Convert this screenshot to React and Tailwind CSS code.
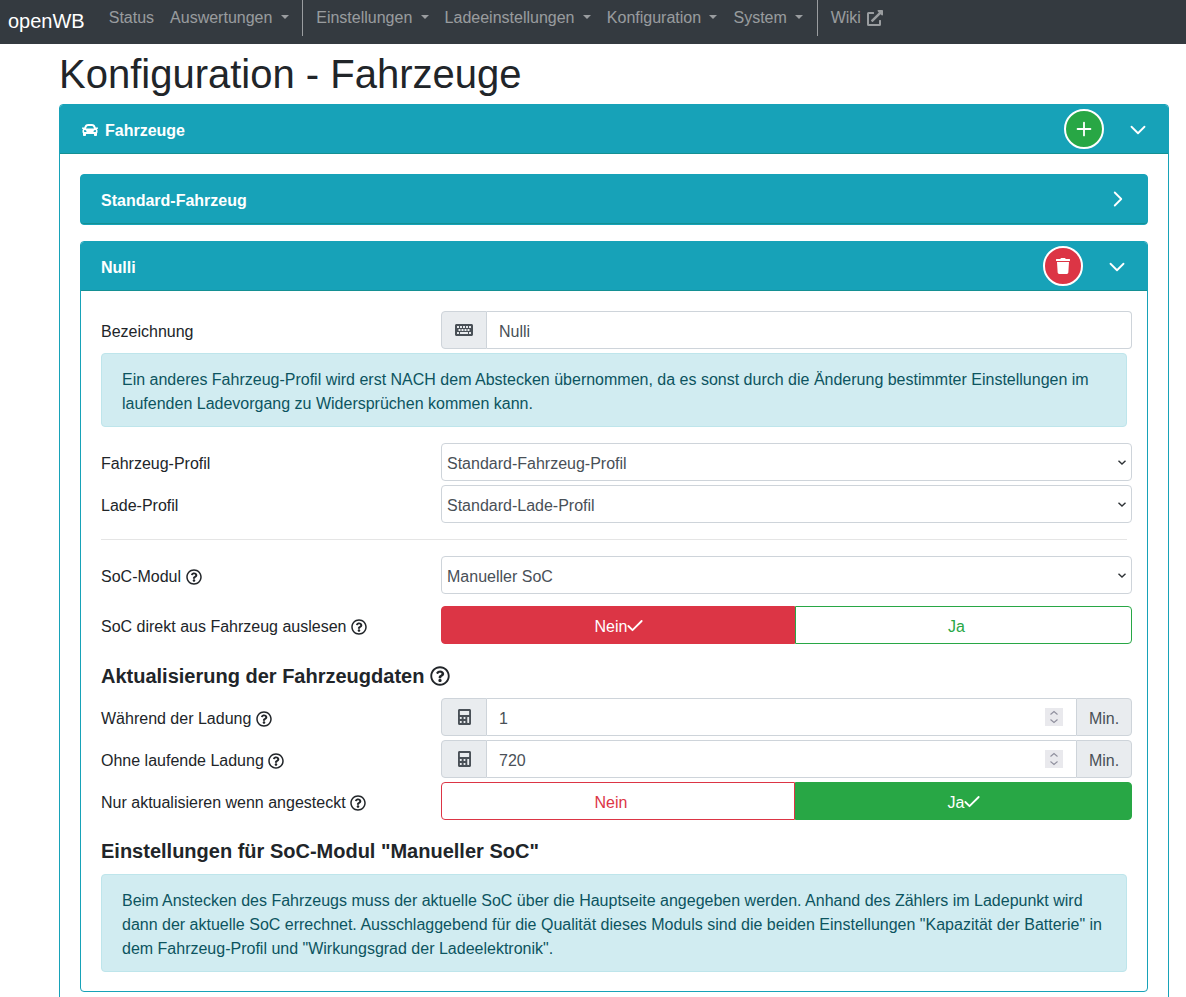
import React from "react";
import { FaCar, FaTrash, FaKeyboard, FaCalculator, FaExternalLinkAlt, FaRegQuestionCircle } from "react-icons/fa";
import { Check, ChevronDown, ChevronRight, Plus } from "lucide-react";

const NavItem = ({ children, caret }) => (
  <a className="flex items-center px-2 text-[16px] text-[#ffffff80] whitespace-pre">
    {children}
    {caret && <span className="ml-[8.33px] mt-[-3px] w-0 h-0 border-t-[4px] border-t-[#ffffff80] border-x-[4px] border-x-transparent" />}
  </a>
);

const Help = () => <FaRegQuestionCircle className="inline-block ml-[4.5px] text-[16px] text-[#212529]" />;

const Label = ({ children, help }) => (
  <div className="w-[340px] shrink-0 flex items-center pt-[4px] text-[16px] text-[#212529]">
    {children}
    {help && <Help />}
  </div>
);

const Row = ({ children, className = "" }) => (
  <div className={"flex items-stretch h-[38px] mr-[-5px] " + className}>{children}</div>
);

const Addon = ({ children, className = "" }) => (
  <div className={"flex items-center justify-center bg-[#e9ecef] border border-[#ced4da] text-[#495057] text-[16px] " + className}>
    {children}
  </div>
);

const SelectRow = ({ label, help, value, className }) => (
  <Row className={className}>
    <Label help={help}>{label}</Label>
    <div className="relative flex-1 min-w-0">
      <select
        defaultValue={value}
        className="w-full h-[38px] bg-white border border-[#ced4da] rounded-[4px] pl-[5px] pr-[20px] pt-[4px] text-[16px] text-[#495057] appearance-none"
      >
        <option>{value}</option>
      </select>
      <svg viewBox="0 0 8 5" className="absolute right-[6px] top-[17px] w-[8px] h-[5px] pointer-events-none" fill="none" stroke="#2f3337" strokeWidth="1.4">
        <path d="M0.5 0.7 L4 4 L7.5 0.7" />
      </svg>
    </div>
  </Row>
);

const NumberRow = ({ label, value, className }) => (
  <Row className={className}>
    <Label help>{label}</Label>
    <Addon className="w-[46px] rounded-l-[4px]">
      <FaCalculator className="w-[13px] h-[16px] text-[#495057]" preserveAspectRatio="none" />
    </Addon>
    <div className="relative flex-1 min-w-0">
      <input
        type="number"
        defaultValue={value}
        className="w-full h-[38px] bg-white border-y border-[#ced4da] px-3 pt-[4px] text-[16px] text-[#495057] outline-none [appearance:textfield] [&::-webkit-inner-spin-button]:appearance-none"
      />
      <div className="absolute right-[13px] top-[10px] w-[18px] h-[18px] bg-[#e9e9ed] pointer-events-none">
        <svg viewBox="0 0 18 18" className="w-[18px] h-[18px]" fill="none" stroke="#8f8f9d" strokeWidth="1.1">
          <path d="M5.5 6.5 L9 3.5 L12.5 6.5" />
          <path d="M5.5 11.5 L9 14.5 L12.5 11.5" />
        </svg>
      </div>
    </div>
    <Addon className="w-[56px] rounded-r-[4px] pt-[4px]">Min.</Addon>
  </Row>
);

const Tick = () => <Check className="w-[20px] h-[20px] ml-[-2px] mr-[-3px] mt-[-3px] shrink-0" strokeWidth={2.2} />;
const NoTick = () => <span className="w-[14px] shrink-0" />;

const Toggle = ({ label, help, yes }) => (
  <Row>
    <Label help={help}>{label}</Label>
    <div className="flex-1 flex text-[16px]">
      {yes ? (
        <>
          <div className="w-[354px] flex items-center justify-center pt-[4px] bg-white text-[#dc3545] border border-[#dc3545] rounded-l-[4px]">Nein<NoTick /></div>
          <div className="flex-1 flex items-center justify-center pt-[4px] bg-[#28a745] text-white border border-[#28a745] rounded-r-[4px]">
            Ja<Tick />
          </div>
        </>
      ) : (
        <>
          <div className="w-[354px] flex items-center justify-center pl-[1px] pt-[4px] bg-[#dc3545] text-white border border-[#dc3545] rounded-l-[4px]">
            Nein<Tick />
          </div>
          <div className="flex-1 flex items-center justify-center pt-[4px] bg-white text-[#28a745] border border-[#28a745] rounded-r-[4px]">Ja<NoTick /></div>
        </>
      )}
    </div>
  </Row>
);

const Alert = ({ children, className = "" }) => (
  <div className={"bg-[#d1ecf1] border border-[#bee5eb] rounded-[4px] px-5 pt-[14px] pb-[10px] text-[16px] leading-6 text-[#0c5460] " + className}>
    {children}
  </div>
);

const Circle = ({ children, color }) => (
  <div className={"w-[40px] h-[40px] rounded-full border-2 border-white flex items-center justify-center text-white " + color}>
    {children}
  </div>
);

const Header = ({ children, right, rounded = "rounded-t-[3px]" }) => (
  <div className={"h-[49px] bg-[#17a2b8] border-b border-[#149093] flex items-center justify-between pl-5 text-white font-bold text-[16px] " + rounded}>
    <span className="pt-[4px] flex items-center">{children}</span>
    {right}
  </div>
);

export default function App() {
  return (
    <div className="h-[997px] overflow-hidden bg-white" style={{ fontFamily: '"Liberation Sans", Arial, sans-serif' }}>
      <nav className="h-[44px] bg-[#343a40] flex items-stretch pl-2 text-[16px]">
        <a className="flex items-center text-white text-[20px] mr-[16px] pb-[3px]">openWB</a>
        <div className="flex items-stretch pb-[8px] pt-0">
          <NavItem>Status</NavItem>
          <NavItem caret>Auswertungen</NavItem>
          <div className="border-l border-[#ffffff80] ml-[5.5px] mr-[5px] h-[36px]" />
          <NavItem caret>Einstellungen</NavItem>
          <NavItem caret>Ladeeinstellungen</NavItem>
          <NavItem caret>Konfiguration</NavItem>
          <NavItem caret>System</NavItem>
          <div className="border-l border-[#ffffff80] ml-[5.5px] mr-[5px] h-[36px]" />
          <NavItem>
            Wiki<FaExternalLinkAlt className="ml-[6px] text-[16px]" />
          </NavItem>
        </div>
      </nav>

      <main className="w-[1110px] ml-[59px] pt-[6px]">
        <h1 className="text-[40px] leading-[48px] text-[#212529] font-normal mb-[6px]">Konfiguration - Fahrzeuge</h1>

        <section className="border border-[#17a2b8] rounded-[4px]">
          <Header
            right={
              <div className="flex items-center">
                <Circle color="bg-[#28a745]"><Plus className="w-[22px] h-[22px]" strokeWidth={2} /></Circle>
                <ChevronDown className="w-[26px] h-[26px] ml-[21px] mr-[17px] mt-[2px]" strokeWidth={1.7} />
              </div>
            }
          >
            <FaCar className="text-[16px] ml-[2px] mr-[7px] mt-[-2px]" />Fahrzeuge
          </Header>

          <div className="p-5">
            <div className="bg-[#17a2b8] rounded-[4px] border border-[#17a2b8]">
              <Header
                rounded="rounded-[3px]"
                right={<ChevronRight className="w-[26px] h-[26px] mr-[16px]" strokeWidth={1.7} />}
              >
                Standard-Fahrzeug
              </Header>
            </div>

            <section className="mt-4 border border-[#17a2b8] rounded-[4px]">
              <Header
                right={
                  <div className="flex items-center">
                    <Circle color="bg-[#dc3545]"><FaTrash className="text-[16px]" /></Circle>
                    <ChevronDown className="w-[26px] h-[26px] ml-[21px] mr-[17px] mt-[2px]" strokeWidth={1.7} />
                  </div>
                }
              >
                Nulli
              </Header>

              <div className="px-5 pt-5 pb-[19px]">
                <Row>
                  <Label>Bezeichnung</Label>
                  <Addon className="w-[46px] rounded-l-[4px]">
                    <FaKeyboard className="text-[18px] text-[#495057]" />
                  </Addon>
                  <input
                    defaultValue="Nulli"
                    className="flex-1 min-w-0 h-[38px] bg-white border border-l-0 border-[#ced4da] rounded-r-[4px] px-3 pt-[4px] text-[16px] text-[#495057] outline-none"
                  />
                </Row>

                <Alert className="mt-1 mb-4">
                  Ein anderes Fahrzeug-Profil wird erst NACH dem Abstecken übernommen, da es sonst durch die Änderung bestimmter Einstellungen im laufenden Ladevorgang zu Widersprüchen kommen kann.
                </Alert>

                <SelectRow label="Fahrzeug-Profil" value="Standard-Fahrzeug-Profil" />
                <SelectRow label="Lade-Profil" value="Standard-Lade-Profil" className="mt-1" />

                <hr className="mt-4 mb-4 border-t border-[#0000001a]" />

                <SelectRow label="SoC-Modul" help value="Manueller SoC" />
                <div className="mt-3">
                  <Toggle label="SoC direkt aus Fahrzeug auslesen" help />
                </div>

                <h2 className="mt-5 mb-[10px] text-[20px] leading-6 font-bold text-[#212529] flex items-center">
                  Aktualisierung der Fahrzeugdaten
                  <FaRegQuestionCircle className="ml-[6px] text-[20px]" />
                </h2>

                <NumberRow label="Während der Ladung" value="1" />
                <NumberRow label="Ohne laufende Ladung" value="720" className="mt-1" />
                <div className="mt-1">
                  <Toggle label="Nur aktualisieren wenn angesteckt" help yes />
                </div>

                <h2 className="mt-[19px] mb-[11px] text-[20px] leading-6 font-bold text-[#212529]">
                  Einstellungen für SoC-Modul "Manueller SoC"
                </h2>

                <Alert>
                  Beim Anstecken des Fahrzeugs muss der aktuelle SoC über die Hauptseite angegeben werden. Anhand des Zählers im Ladepunkt wird dann der aktuelle SoC errechnet. Ausschlaggebend für die Qualität dieses Moduls sind die beiden Einstellungen "Kapazität der Batterie" in dem Fahrzeug-Profil und "Wirkungsgrad der Ladeelektronik".
                </Alert>
              </div>
            </section>
          </div>
        </section>
      </main>
    </div>
  );
}
